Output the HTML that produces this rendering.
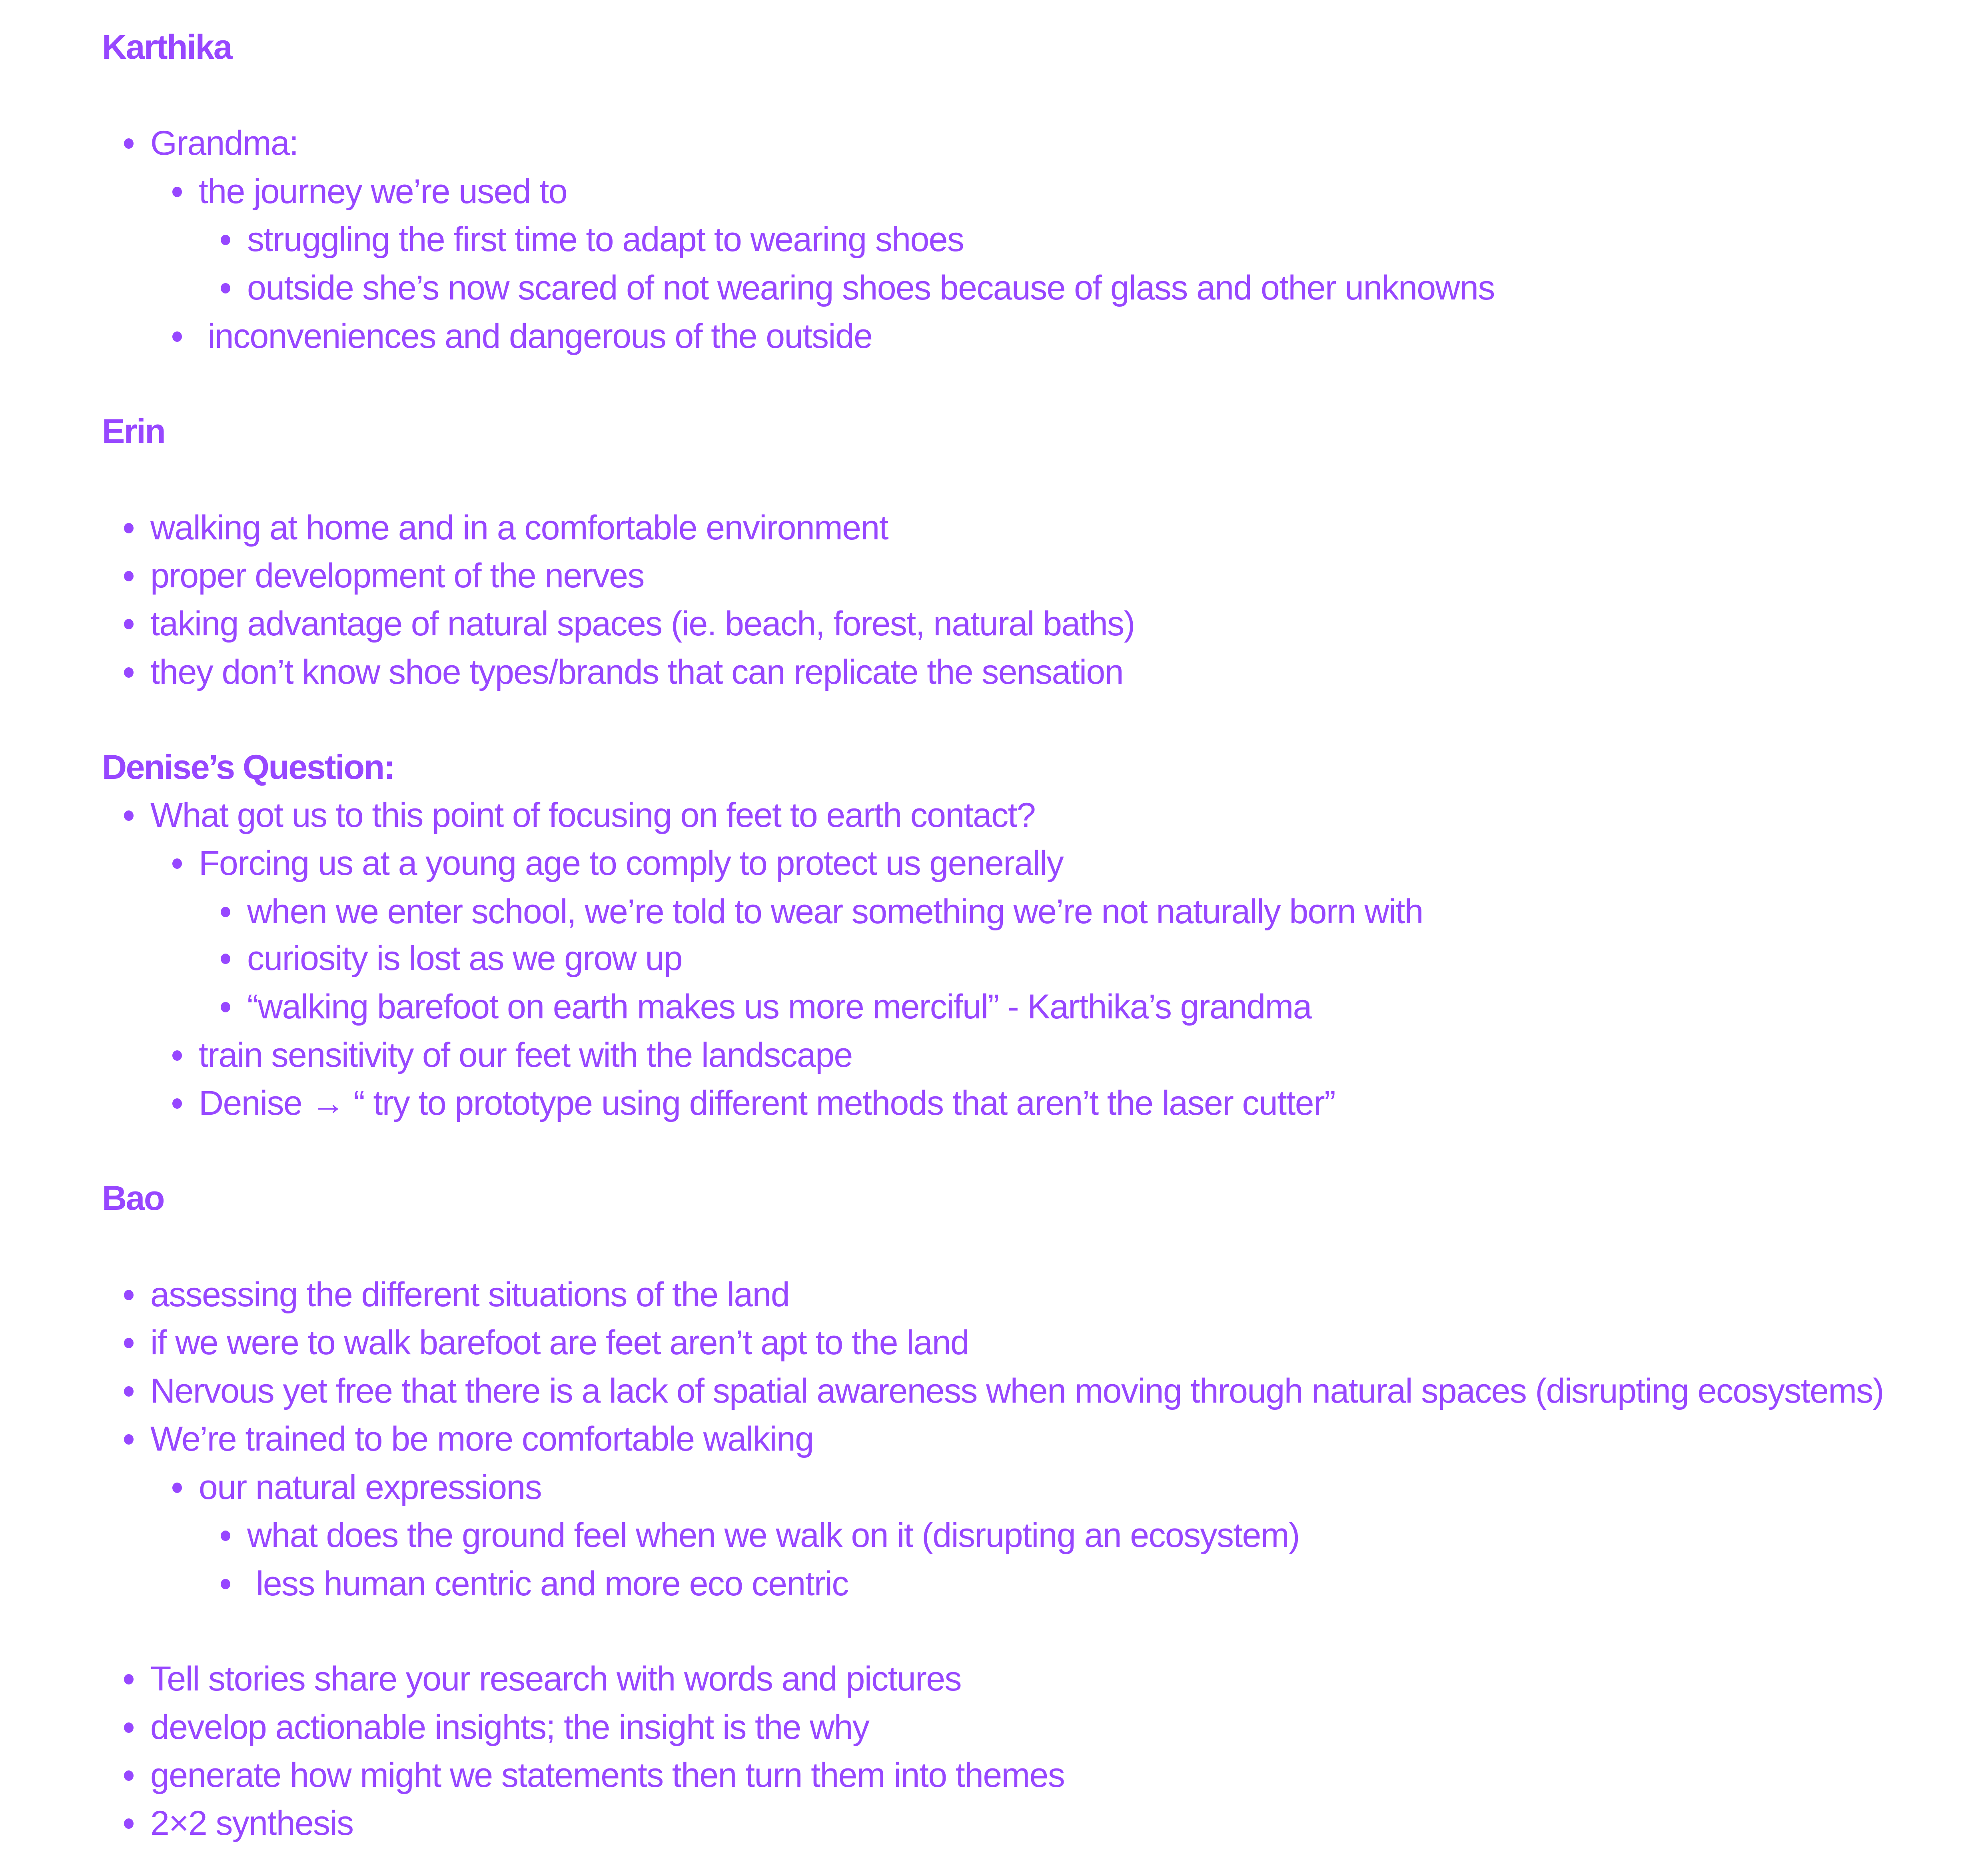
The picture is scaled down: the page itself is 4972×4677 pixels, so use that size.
<!DOCTYPE html>
<html><head><meta charset="utf-8"><style>
html,body{margin:0;padding:0;background:#fff;}
body{width:4972px;height:4677px;position:relative;overflow:hidden;font-family:"Liberation Sans",sans-serif;color:#9747ff;}
.l{position:absolute;white-space:pre;font-size:86px;line-height:121px;letter-spacing:-1.6px;}
.h{font-weight:bold;left:255px;letter-spacing:-2.5px;}
.b1{left:376px;}.b2{left:497px;}.b3{left:618px;}
.l:not(.h)::before{content:"";position:absolute;width:24px;height:26px;border-radius:50%;background:#9747ff;top:48px;left:-66px;}
</style></head><body>
<div class="l h" style="top:58px">Karthika</div>
<div class="l b1" style="top:298px">Grandma:</div>
<div class="l b2" style="top:419px">the journey we’re used to</div>
<div class="l b3" style="top:539px">struggling the first time to adapt to wearing shoes</div>
<div class="l b3" style="top:660px">outside she’s now scared of not wearing shoes because of glass and other unknowns</div>
<div class="l b2" style="top:781px"> inconveniences and dangerous of the outside</div>
<div class="l h" style="top:1019px">Erin</div>
<div class="l b1" style="top:1260px">walking at home and in a comfortable environment</div>
<div class="l b1" style="top:1380px">proper development of the nerves</div>
<div class="l b1" style="top:1500px">taking advantage of natural spaces (ie. beach, forest, natural baths)</div>
<div class="l b1" style="top:1621px">they don’t know shoe types/brands that can replicate the sensation</div>
<div class="l h" style="top:1859px">Denise’s Question:</div>
<div class="l b1" style="top:1979px">What got us to this point of focusing on feet to earth contact?</div>
<div class="l b2" style="top:2099px">Forcing us at a young age to comply to protect us generally</div>
<div class="l b3" style="top:2220px">when we enter school, we’re told to wear something we’re not naturally born with</div>
<div class="l b3" style="top:2337px">curiosity is lost as we grow up</div>
<div class="l b3" style="top:2458px">“walking barefoot on earth makes us more merciful” - Karthika’s grandma</div>
<div class="l b2" style="top:2579px">train sensitivity of our feet with the landscape</div>
<div class="l b2" style="top:2699px">Denise → “ try to prototype using different methods that aren’t the laser cutter”</div>
<div class="l h" style="top:2937px">Bao</div>
<div class="l b1" style="top:3178px">assessing the different situations of the land</div>
<div class="l b1" style="top:3298px">if we were to walk barefoot are feet aren’t apt to the land</div>
<div class="l b1" style="top:3419px">Nervous yet free that there is a lack of spatial awareness when moving through natural spaces (disrupting ecosystems)</div>
<div class="l b1" style="top:3539px">We’re trained to be more comfortable walking</div>
<div class="l b2" style="top:3660px">our natural expressions</div>
<div class="l b3" style="top:3780px">what does the ground feel when we walk on it (disrupting an ecosystem)</div>
<div class="l b3" style="top:3901px"> less human centric and more eco centric</div>
<div class="l b1" style="top:4139px">Tell stories share your research with words and pictures</div>
<div class="l b1" style="top:4260px">develop actionable insights; the insight is the why</div>
<div class="l b1" style="top:4380px">generate how might we statements then turn them into themes</div>
<div class="l b1" style="top:4500px">2×2 synthesis</div>
</body></html>
